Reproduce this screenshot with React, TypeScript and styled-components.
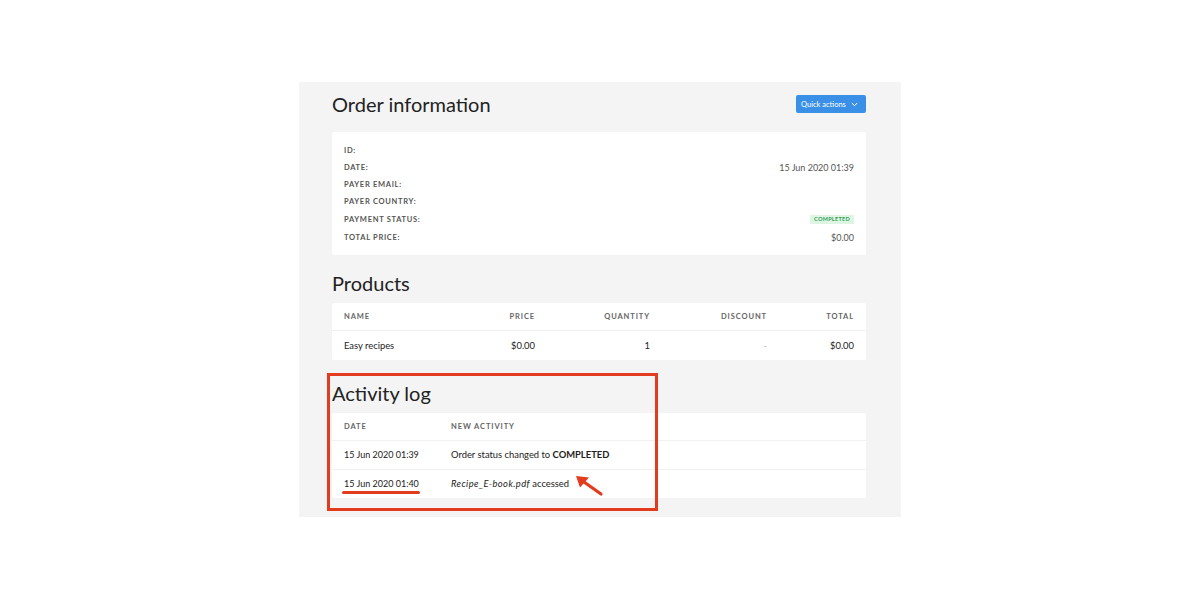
import React from "react";
import styled, { createGlobalStyle } from "styled-components";

const GlobalStyle = createGlobalStyle`
  body {
    margin: 0;
    background: #ffffff;
    font-family: Lato, "Open Sans", sans-serif;
    color: #333;
  }
`;

const Page = styled.div`
  padding-top: 82px;
  height: 600px;
  box-sizing: border-box;
`;

const Panel = styled.div`
  width: 602px;
  margin-left: 299px;
  background: #f4f4f4;
  padding: 10px 35px 19px 33px;
  box-sizing: border-box;
`;

const HeaderRow = styled.div`
  display: flex;
  justify-content: space-between;
  align-items: center;
  height: 24px;
  margin-bottom: 16px;
`;

const Title = styled.h2`
  margin: 0;
  font-size: 20px;
  line-height: 24px;
  font-weight: 400;
  color: #222;
`;

const SectionTitle = styled(Title)`
  margin-bottom: 8px;
`;

const QuickButton = styled.button`
  display: flex;
  align-items: center;
  gap: 5px;
  height: 18px;
  width: 70px;
  padding: 0 0 0 5px;
  border: none;
  border-radius: 2px;
  background: #3a8fe6;
  color: #fff;
  font-family: inherit;
  font-size: 7.5px;
`;

const Card = styled.div`
  background: #fff;
  border-radius: 2px;
`;

const InfoCard = styled(Card)`
  padding: 10px 12px 8px;
`;

const InfoRow = styled.div<{ $h: number }>`
  display: flex;
  justify-content: space-between;
  align-items: center;
  height: ${(p) => p.$h}px;
`;

const Label = styled.span`
  font-size: 7.5px;
  font-weight: 700;
  letter-spacing: 0.7px;
  color: #555;
  text-transform: uppercase;
`;

const Value = styled.span`
  font-size: 9px;
  color: #555;
`;

const Badge = styled.span`
  background: #dff5e4;
  color: #35a05a;
  font-size: 5.5px;
  font-weight: 700;
  letter-spacing: 0.3px;
  padding: 2px 4px;
  line-height: 5px;
`;

const Section = styled.div<{ $top: number }>`
  position: relative;
  padding-top: ${(p) => p.$top}px;
`;

const Table = styled.table`
  width: 100%;
  table-layout: fixed;
  border-collapse: collapse;
  background: #fff;
  border-radius: 2px;
`;

const Th = styled.th<{ $align?: string; $w?: number }>`
  height: 27px;
  padding: 0 12px;
  text-align: ${(p) => p.$align || "left"};
  width: ${(p) => (p.$w ? `${p.$w}px` : "auto")};
  font-size: 7.5px;
  font-weight: 700;
  letter-spacing: 0.9px;
  color: #666;
  border-bottom: 1px solid #f1f1f1;
  box-sizing: border-box;
`;

const Td = styled.td<{ $align?: string; $h?: number; $muted?: boolean }>`
  height: ${(p) => p.$h || 30}px;
  padding: 0 12px;
  text-align: ${(p) => p.$align || "left"};
  font-size: 9.4px;
  color: ${(p) => (p.$muted ? "#bbb" : "#222")};
  box-sizing: border-box;
  white-space: nowrap;
`;

const LogTd = styled(Td)`
  border-top: 1px solid #f1f1f1;
`;

const DateText = styled.span`
  font-size: 9px;
`;

const Marked = styled(DateText)`
  position: relative;
  &::after {
    content: "";
    position: absolute;
    left: -2px;
    right: -1px;
    bottom: -5px;
    height: 3px;
    border-radius: 2px;
    background: #e23b1e;
  }
`;

const FileName = styled.i`
  letter-spacing: 0.4px;
`;

const ArrowWrap = styled.span`
  position: relative;
`;

const Arrow = styled.svg`
  position: absolute;
  left: 5px;
  top: -3px;
`;

const Highlight = styled.div`
  position: absolute;
  left: -5px;
  top: 13px;
  width: 331px;
  height: 138px;
  border: 3px solid #e23b1e;
  box-sizing: border-box;
  pointer-events: none;
`;

const Chevron = () => (
  <svg width="7" height="5" viewBox="0 0 7 5">
    <path d="M0.8 1 L3.5 3.7 L6.2 1" fill="none" stroke="#fff" strokeWidth="1" />
  </svg>
);

export default function App() {
  return (
    <Page>
      <GlobalStyle />
      <Panel>
        <HeaderRow>
          <Title>Order information</Title>
          <QuickButton>
            Quick actions <Chevron />
          </QuickButton>
        </HeaderRow>
        <InfoCard>
          <InfoRow $h={17}>
            <Label>ID:</Label>
          </InfoRow>
          <InfoRow $h={17}>
            <Label>Date:</Label>
            <Value>15 Jun 2020 01:39</Value>
          </InfoRow>
          <InfoRow $h={17}>
            <Label>Payer email:</Label>
          </InfoRow>
          <InfoRow $h={17}>
            <Label>Payer country:</Label>
          </InfoRow>
          <InfoRow $h={18}>
            <Label>Payment status:</Label>
            <Badge>COMPLETED</Badge>
          </InfoRow>
          <InfoRow $h={19}>
            <Label>Total price:</Label>
            <Value>$0.00</Value>
          </InfoRow>
        </InfoCard>

        <Section $top={16}>
          <SectionTitle>Products</SectionTitle>
          <Table>
            <thead>
              <tr>
                <Th $w={160}>NAME</Th>
                <Th $w={55} $align="right">PRICE</Th>
                <Th $w={115} $align="right">QUANTITY</Th>
                <Th $w={117} $align="right">DISCOUNT</Th>
                <Th $w={87} $align="right">TOTAL</Th>
              </tr>
            </thead>
            <tbody>
              <tr>
                <Td>Easy recipes</Td>
                <Td $align="right">$0.00</Td>
                <Td $align="right">1</Td>
                <Td $align="right" $muted>
                  -
                </Td>
                <Td $align="right">$0.00</Td>
              </tr>
            </tbody>
          </Table>
        </Section>

        <Section $top={21}>
          <SectionTitle>Activity log</SectionTitle>
          <Table>
            <thead>
              <tr>
                <Th $w={107}>DATE</Th>
                <Th>NEW ACTIVITY</Th>
              </tr>
            </thead>
            <tbody>
              <tr>
                <LogTd $h={29}>
                  <DateText>15 Jun 2020 01:39</DateText>
                </LogTd>
                <LogTd $h={29}>
                  Order status changed to <b>COMPLETED</b>
                </LogTd>
              </tr>
              <tr>
                <LogTd $h={29}>
                  <Marked>15 Jun 2020 01:40</Marked>
                </LogTd>
                <LogTd $h={29}>
                  <FileName>Recipe_E-book.pdf</FileName> accessed
                  <ArrowWrap>
                    <Arrow width="30" height="22" viewBox="0 0 30 22">
                      <path d="M27 19 L10 7" stroke="#e23b1e" strokeWidth="3.2" strokeLinecap="round" />
                      <path d="M2 1 L15 2.5 L6 12.5 Z" fill="#e23b1e" />
                    </Arrow>
                  </ArrowWrap>
                </LogTd>
              </tr>
            </tbody>
          </Table>
          <Highlight />
        </Section>
      </Panel>
    </Page>
  );
}
